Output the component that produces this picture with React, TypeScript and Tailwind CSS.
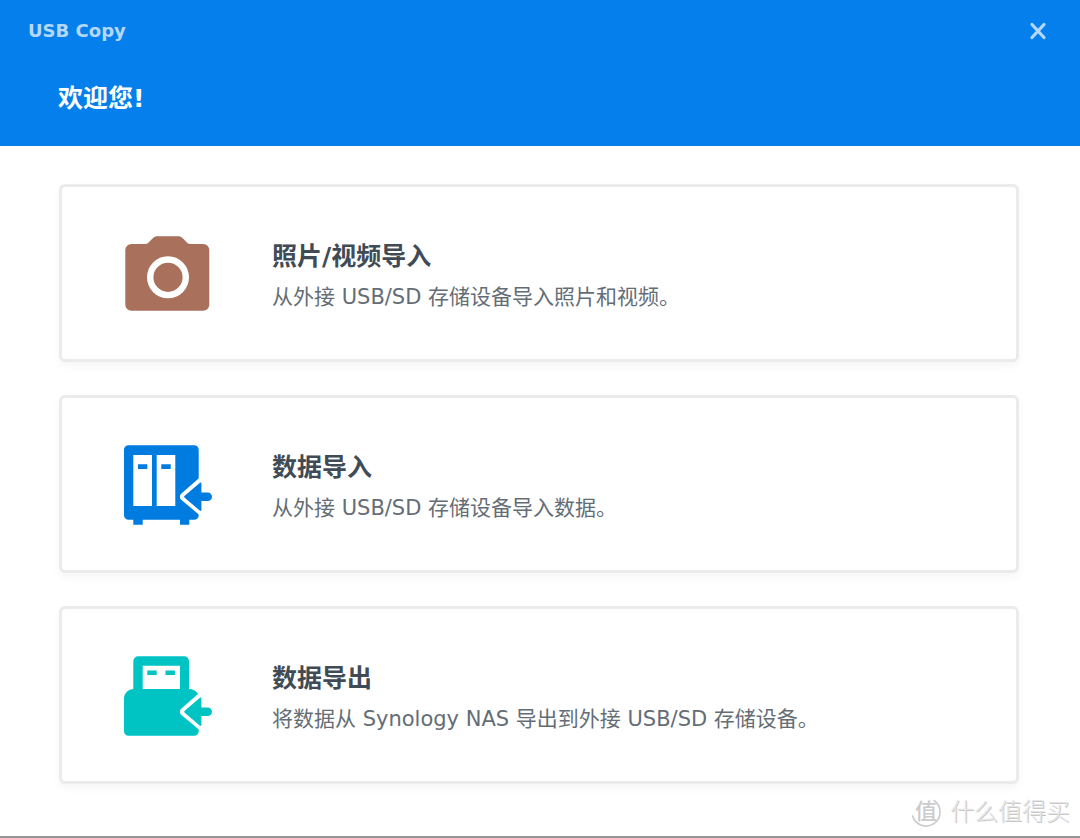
import React from 'react';

interface CopyTask {
  id: string;
  title: string;
  description: string;
  icon: React.ComponentType;
}

const CameraIcon: React.FC = () => (
  <svg viewBox="0 0 88 88" className="w-[88px] h-[88px] shrink-0" aria-hidden="true">
    <path
      d="M7.300 15H21c2 0 3-.8 4.300-2.200L28.500 9.500C30 7.900 31.500 7.300 34 7.300h19.500c2.500 0 4 .6 5.500 2.200l3.200 3.300C63.500 14.200 64.500 15 66.500 15h12.800a6 6 0 0 1 6 6v54.700a6 6 0 0 1-6 6h-72a6 6 0 0 1-6-6V21a6 6 0 0 1 6-6Z"
      fill="#a9705b"
    />
    <circle cx="44" cy="48.300" r="17.800" fill="none" stroke="#fff" strokeWidth="6.400" />
  </svg>
);

const NasImportIcon: React.FC = () => (
  <svg viewBox="0 0 88 88" className="w-[88px] h-[88px] shrink-0" aria-hidden="true">
    <path
      d="M4.500 5.300h65.700a4.500 4.500 0 0 1 4.500 4.500v65.400a4.500 4.500 0 0 1-4.500 4.500h-4.900v5H56v-5H18.700v5H9.300v-5H4.500A4.500 4.500 0 0 1 0 75.200V9.800a4.500 4.500 0 0 1 4.500-4.500Z"
      fill="#007be0"
    />
    <path d="M9.300 15H28v51H9.300zM32.700 15h18.600v51H32.700z" fill="#fff" />
    <path d="M14 24.300h9.300v4.600H14zM37.300 24.300h9.400v4.600h-9.400z" fill="#007be0" />
    <path d="M76 37.300 57.200 53.700a4 4 0 0 0 0 6L76 75.500Z" fill="#fff" />
    <path
      d="m60.700 55.700 15-12.800c.9-.8 1.700-.4 1.700.7v8.800h6.300a4.300 4.300 0 0 1 0 8.600h-6.300v8.800c0 1.100-.8 1.500-1.700.7l-15-12.800a1.300 1.300 0 0 1 0-2Z"
      fill="#007be0"
    />
  </svg>
);

const UsbExportIcon: React.FC = () => (
  <svg viewBox="0 0 88 88" className="w-[88px] h-[88px] shrink-0" aria-hidden="true">
    <path
      d="M14.300 5.300H60a5 5 0 0 1 5 5V38c4 0 7.500 2 9.700 5.500v36.700a4.500 4.500 0 0 1-4.500 4.500H4.500A4.500 4.500 0 0 1 0 80.200V47.300A9.300 9.300 0 0 1 9.300 38V10.300a5 5 0 0 1 5-5Z"
      fill="#00c4c4"
    />
    <path d="M18.700 14.700H56V38H18.700z" fill="#fff" />
    <path d="M23.300 19.500h9.400V24h-9.400zM41.500 19.500h9.400V24h-9.400z" fill="#00c4c4" />
    <path d="M76 41.300 57.200 57.700a4 4 0 0 0 0 6L76 79.500Z" fill="#fff" />
    <path
      d="m60.700 59.700 15-12.800c.9-.8 1.700-.4 1.700.7v8.800h6.300a4.300 4.300 0 0 1 0 8.600h-6.300v8.800c0 1.100-.8 1.500-1.700.7l-15-12.800a1.300 1.300 0 0 1 0-2Z"
      fill="#00c4c4"
    />
  </svg>
);

const tasks: CopyTask[] = [
  {
    id: 'photo-import',
    title: '照片/视频导入',
    description: '从外接 USB/SD 存储设备导入照片和视频。',
    icon: CameraIcon,
  },
  {
    id: 'data-import',
    title: '数据导入',
    description: '从外接 USB/SD 存储设备导入数据。',
    icon: NasImportIcon,
  },
  {
    id: 'data-export',
    title: '数据导出',
    description: '将数据从 Synology NAS 导出到外接 USB/SD 存储设备。',
    icon: UsbExportIcon,
  },
];

const TaskCard: React.FC<{ task: CopyTask }> = ({ task }) => {
  const Icon = task.icon;

  return (
    <button
      type="button"
      className="w-full flex items-center gap-[60px] px-[62px] py-[42px] text-left bg-white border-3 border-[#e9ebec] rounded-md shadow-[0_4px_10px_rgba(0,0,0,0.04)] hover:border-[#057feb]"
    >
      <Icon />
      <span className="min-w-0 pt-2">
        <span className="block text-[25px] leading-10 font-bold text-[#414b55]">{task.title}</span>
        <span className="block text-[21px] leading-10 text-[#646d76]">{task.description}</span>
      </span>
    </button>
  );
};

const Watermark: React.FC = () => (
  <div className="absolute right-[10px] bottom-2 flex items-center gap-2 pointer-events-none">
    <span className="relative flex items-center justify-center w-8 h-8">
      <svg viewBox="0 0 32 32" className="absolute inset-0" fill="none" aria-hidden="true">
        <path d="M24 4.500A14 14 0 1 1 2.600 20" stroke="#cbcbcb" strokeWidth="1.600" strokeLinecap="round" />
      </svg>
      <span className="text-[22px] leading-8 font-medium text-[#cbcbcb]">值</span>
    </span>
    <span className="text-2xl leading-8 font-light text-[#e6e6e6] [text-shadow:1px_1px_0_#c8c8c8]">什么值得买</span>
  </div>
);

const App: React.FC = () => {
  return (
    <div className="relative min-h-screen flex flex-col bg-white border-b-2 border-[#959595] font-['DejaVu_Sans','Noto_Sans_CJK_SC',sans-serif]">
      <header className="h-[146px] bg-[#057feb] text-white">
        <div className="flex items-center justify-between h-[61px] pl-7 pr-8">
          <h1 className="text-lg font-bold text-[#b4d8f9]">USB Copy</h1>
          <button type="button" aria-label="关闭" className="text-[#b4d8f9] hover:text-white">
            <svg viewBox="0 0 20 20" className="w-5 h-5" aria-hidden="true">
              <path d="m4 3.500 12 13M16 3.500 4 16.500" stroke="currentColor" strokeWidth="3.200" strokeLinecap="round" />
            </svg>
          </button>
        </div>
        <h2 className="px-[58px] pt-[18px] text-[25px] leading-10 font-bold">欢迎您!</h2>
      </header>

      <main className="flex-1 flex flex-col gap-[33px] pl-[59px] pr-[61px] pt-[38px] pb-12">
        {tasks.map(task => (
          <TaskCard key={task.id} task={task} />
        ))}
      </main>

      <Watermark />
    </div>
  );
};

export default App;
